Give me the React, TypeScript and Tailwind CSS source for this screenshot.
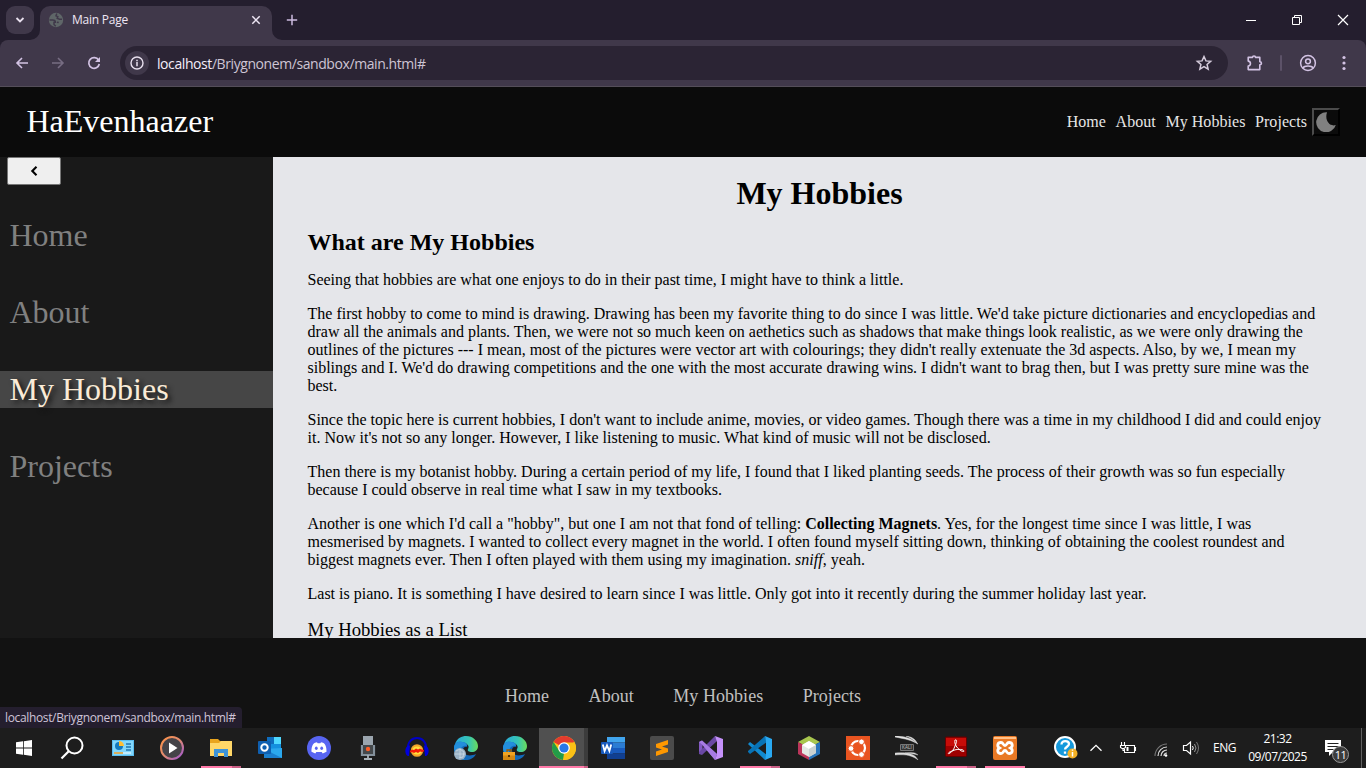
import React from 'react';
import type { ReactNode } from 'react';

const pages = ['Home', 'About', 'My Hobbies', 'Projects'];

function Ico({ s = 24, v = 24, children, className = '' }: { s?: number; v?: number; children: ReactNode; className?: string }) {
  return (
    <svg width={s} height={s} viewBox={`0 0 ${v} ${v}`} fill="none" className={`block shrink-0 ${className}`}>
      {children}
    </svg>
  );
}

function TabStrip() {
  return (
    <div className="flex h-10 shrink-0 bg-[#241e2e]">
      <div className="ml-1.5 mt-1.5 flex size-7 items-center justify-center rounded-[9px] bg-[#40384a]">
        <Ico s={10} v={10}><path d="M1.5 3l3.5 3.5L8.5 3" stroke="#e8e0ee" strokeWidth="1.8" /></Ico>
      </div>
      <div className="relative ml-1.5 mt-1.5 flex h-[34px] w-[232px] items-center rounded-t-[10px] bg-[#40384a] pb-[6px] pl-2">
        <svg width="10" height="10" className="absolute -left-[10px] bottom-0"><path d="M10 0v10H0A10 10 0 0 0 10 0" fill="#40384a" /></svg>
        <svg width="10" height="10" className="absolute -right-[10px] bottom-0"><path d="M0 0v10h10A10 10 0 0 1 0 0" fill="#40384a" /></svg>
        <Ico s={16} v={16}>
          <circle cx="8" cy="8" r="7.2" fill="#5f6668" />
          <path d="M8.800 1.500L8 3.800l1.800.8-.6 1.800 2.300.8h2.500M1.400 8h3.200c1.800 0 2.800.8 2.800 2.200H6v2.300l1.800 1.700M9 10.200l1.700.4" stroke="#40384a" strokeWidth="1.500" />
        </Ico>
        <span className="mb-px ml-2 mt-px text-[12px] leading-4 tracking-[-0.22px] text-[#eee6f4]">Main Page</span>
        <Ico s={10} v={10} className="ml-auto mr-[11px]"><path d="M1.300 1.300l7.400 7.400m0-7.400L1.300 8.700" stroke="#eee6f4" strokeWidth="1.500" /></Ico>
      </div>
      <Ico s={12} v={12} className="ml-[14px] mt-[14px]"><path d="M6 .8v10.400M.8 6h10.400" stroke="#cbbbe0" strokeWidth="1.500" /></Ico>
      <div className="ml-auto flex h-10 items-center">
        <div className="flex w-[46px] justify-center"><div className="h-px w-[10px] bg-white" /></div>
        <div className="flex w-[46px] justify-center">
          <Ico s={10} v={10}><path d="M.5 2.500h7v7h-7zM2.500 2.500v-2h7v7h-2" stroke="#fff" /></Ico>
        </div>
        <div className="flex w-[46px] justify-center">
          <Ico s={12} v={12}><path d="M1 1l10 10m0-10L1 11" stroke="#fff" strokeWidth="1.200" /></Ico>
        </div>
      </div>
    </div>
  );
}

function Toolbar() {
  return (
    <div className="h-[47px] shrink-0 bg-[#241e2e]">
      <div className="flex h-[47px] items-center rounded-t-[8px] border-b border-[#544e59] bg-[#40384a]">
        <Ico s={14} v={14} className="ml-[15px]"><path d="M13 7H2m5-5L2 7l5 5" stroke="#d3c3e4" strokeWidth="1.600" /></Ico>
        <Ico s={14} v={14} className="ml-[22px]"><path d="M1 7h11M7 2l5 5-5 5" stroke="#776d83" strokeWidth="1.600" /></Ico>
        <Ico s={14} v={14} className="ml-[22px]">
          <path d="M11.600 4.200A5.300 5.300 0 1 0 12.300 8" stroke="#d3c3e4" strokeWidth="1.700" />
          <path d="M13 1v5H8z" fill="#d3c3e4" />
        </Ico>
        <div className="ml-[19px] flex h-[34px] w-[1108px] items-center rounded-full bg-[#2b2434] pl-[5px]">
          <div className="flex size-6 items-center justify-center rounded-full bg-[#40384a]">
            <Ico s={14} v={14}>
              <circle cx="7" cy="7" r="6" stroke="#e8e0ee" strokeWidth="1.400" />
              <path d="M7 6v4.200M7 3.700v1.500" stroke="#e8e0ee" strokeWidth="1.500" />
            </Ico>
          </div>
          <span className="ml-2 mt-px text-[14px] leading-5 tracking-[-0.42px] text-[#cec5d4]"><span className="text-[#f4edf9]">localhost</span>/Briygnonem/sandbox/main.html#</span>
          <Ico s={18} v={24} className="ml-auto mr-[15px]">
            <path d="M12 3.400l2.600 5.800 6.300.6-4.800 4.200 1.400 6.200-5.500-3.300-5.500 3.300 1.400-6.200-4.800-4.200 6.300-.6z" stroke="#d6ccdc" strokeWidth="2" />
          </Ico>
        </div>
        <Ico s={18} v={18} className="ml-[17px]">
          <path d="M3.200 3.400H7.500C7.500 1.500 10.500 1.500 10.500 3.400h4.300v4.400c2.200 0 2.200 3 0 3v4.800H3.200v-3.500c3-.3 3-4.700 0-5z" stroke="#d3c3e4" strokeWidth="1.600" strokeLinejoin="round" />
        </Ico>
        <div className="ml-[17px] h-4 w-[2px] rounded bg-[#5c5268]" />
        <Ico s={18} v={18} className="ml-[17px]">
          <circle cx="9" cy="9" r="7.400" stroke="#d3c3e4" strokeWidth="1.500" />
          <circle cx="9" cy="7.300" r="2.400" stroke="#d3c3e4" strokeWidth="1.500" />
          <path d="M4 14c1.200-2.600 8.800-2.600 10 0" stroke="#d3c3e4" strokeWidth="1.500" />
        </Ico>
        <Ico s={16} v={16} className="ml-[19px]"><circle cx="8" cy="2.500" r="1.600" fill="#d3c3e4" /><circle cx="8" cy="8" r="1.600" fill="#d3c3e4" /><circle cx="8" cy="13.500" r="1.600" fill="#d3c3e4" /></Ico>
      </div>
    </div>
  );
}

function SiteHeader() {
  return (
    <header className="flex h-[70px] shrink-0 items-center bg-[#0b0b0b] pl-[26.5px] pr-[26px] text-white">
      <div className="mb-0.5 text-[32px] leading-[37px]">HaEvenhaazer</div>
      <nav className="ml-auto flex gap-[9.600px] text-[16px] leading-[18px] tracking-[0.05px] text-[#e6e6e6]">
        {pages.map((p) => <a key={p}>{p}</a>)}
      </nav>
      <button className="ml-[5px] flex size-7 items-center justify-center border-2 border-t-[#4b4b4b] border-r-black border-b-black border-l-[#4b4b4b] bg-[#0b0b0b]">
        <Ico s={20} v={20}><path d="M11 .3A10 10 0 1 0 19.800 13 C14 15 8.300 9 11 .3z" fill="#808080" /></Ico>
      </button>
    </header>
  );
}

function Sidebar() {
  return (
    <aside className="w-[273px] shrink-0 bg-[#191919]">
      <button className="ml-[7px] flex h-7 w-[54px] items-center justify-center rounded-[2px] border border-[#767676] bg-[#efefef]">
        <Ico s={10} v={10}><path d="M7.500 .8L3.300 5l4.200 4.200" stroke="#000" strokeWidth="2.100" /></Ico>
      </button>
      <ul className="mt-8 flex flex-col gap-10 text-[32px] leading-[37px]">
        {pages.map((p) => (
          <li key={p} className={p === 'My Hobbies' ? 'bg-[#464646] pl-[9.500px] text-[#faebd7] [text-shadow:3px_3px_5px_#111]' : 'pl-[9.500px] text-[#808080]'}>{p}</li>
        ))}
      </ul>
    </aside>
  );
}

function Article() {
  return (
    <main className="min-w-0 flex-1 overflow-hidden whitespace-nowrap bg-[#e5e6ea] px-[34.500px] text-[16px] leading-[18px] text-black">
      <h1 className="mt-[18px] text-center text-[32px] font-bold leading-[37px]">My Hobbies</h1>
      <h2 className="mt-[17px] text-[24px] font-bold leading-[27px]">What are My Hobbies</h2>
      <div className="mt-[15px] flex flex-col gap-4">
        <p>Seeing that hobbies are what one enjoys to do in their past time, I might have to think a little.</p>
        <p>
          The first hobby to come to mind is drawing. Drawing has been my favorite thing to do since I was little. We'd take picture dictionaries and encyclopedias and<br />
          draw all the animals and plants. Then, we were not so much keen on aethetics such as shadows that make things look realistic, as we were only drawing the<br />
          outlines of the pictures --- I mean, most of the pictures were vector art with colourings; they didn't really extenuate the 3d aspects. Also, by we, I mean my<br />
          siblings and I. We'd do drawing competitions and the one with the most accurate drawing wins. I didn't want to brag then, but I was pretty sure mine was the<br />
          best.
        </p>
        <p>
          Since the topic here is current hobbies, I don't want to include anime, movies, or video games. Though there was a time in my childhood I did and could enjoy<br />
          it. Now it's not so any longer. However, I like listening to music. What kind of music will not be disclosed.
        </p>
        <p>
          Then there is my botanist hobby. During a certain period of my life, I found that I liked planting seeds. The process of their growth was so fun especially<br />
          because I could observe in real time what I saw in my textbooks.
        </p>
        <p>
          Another is one which I'd call a "hobby", but one I am not that fond of telling: <b>Collecting Magnets</b>. Yes, for the longest time since I was little, I was<br />
          mesmerised by magnets. I wanted to collect every magnet in the world. I often found myself sitting down, thinking of obtaining the coolest roundest and<br />
          biggest magnets ever. Then I often played with them using my imagination. <i>sniff</i>, yeah.
        </p>
        <p>Last is piano. It is something I have desired to learn since I was little. Only got into it recently during the summer holiday last year.</p>
        <div className="text-[18.720px] leading-[22px]">My Hobbies as a List</div>
      </div>
    </main>
  );
}

function Footer() {
  return (
    <footer className="relative flex h-[90px] shrink-0 items-center justify-center gap-[39.500px] bg-[#121212] pt-[26px] text-[18px] leading-5 tracking-[0.04px] text-[#c0c0c0]">
      {pages.map((p) => <a key={p}>{p}</a>)}
      <div className="absolute bottom-0 left-0 h-[21px] w-[242px] rounded-tr-[4px] bg-[#241e2e] pl-[5px] font-['Open_Sans','Noto_Sans',sans-serif] text-[12px] leading-[21px] tracking-[-0.350px] text-[#cfc4d8]">localhost/Briygnonem/sandbox/main.html#</div>
    </footer>
  );
}

const Edge = () => (
  <>
    <path d="M1 8C3 2 8 0 12 0c7 0 12 5 12 10 0 4-3 6-6 6-3 0-5-1-4-3 2-3-1-6-5-6-3 0-6 0-8 1z" fill="url(#edgeGreen)" />
    <path d="M0 12C0 7 4 5 8 6c4 0 6 3 5 5-1-1-4 0-4 3 0 5 6 7 13 4-2 4-6 6-10 6A12 12 0 0 1 0 12z" fill="#1269ba" />
    <path d="M0 12C0 7 4 5 8 6c3 0 5 2 5 4-4-1-7 2-7 6 0 4 3 7 6 8A12 12 0 0 1 0 12z" fill="#238fdc" />
  </>
);

const icons: { art: ReactNode; run?: 'one' | 'many'; active?: boolean }[] = [
  { art: <><path d="M1 4h22v16H1z" fill="#5bbef0" /><path d="M2 5h20v14H2z" fill="#83d7fc" /><circle cx="8" cy="10" r="4" fill="#1479bd" /><path d="M8 10V5a5 5 0 0 1 5 5z" fill="#ffbd32" /><path d="M15 8h5M15 11h5M15 14h5" stroke="#2176ae" strokeWidth="1.600" /><path d="M3 17h9" stroke="#f5a12a" strokeWidth="1.500" /><path d="M12 17h8" stroke="#fff" /></> },
  { art: <><circle cx="12" cy="12" r="11" fill="#454348" stroke="url(#mediaRing)" strokeWidth="2" /><path d="M9 6.500l8.500 5.500L9 17.500z" fill="#fff" /></> },
  { art: <><path d="M1 3h8l2 2h12v15H1z" fill="#e9a51e" /><path d="M1 7h9l2-2h11v15H1z" fill="#ffd768" /><path d="M5 13h14v8h-4v-4H9v4H5z" fill="#3e94d8" /></>, run: 'many' },
  { art: <><path d="M9 1h14v15H9z" fill="#1490df" /><path d="M9 1h7v7H9z" fill="#0f6cbd" /><path d="M16 1h7v7h-7z" fill="#50d9ff" /><path d="M6 12l9 5 9-5v10H6z" fill="#1a7fce" /><path d="M24 12v10L6 13z" fill="#2ba8ed" /><rect y="5" width="13" height="13" rx="1" fill="#0f5fb0" /><circle cx="6.500" cy="11.500" r="3.200" stroke="#fff" strokeWidth="2" /></> },
  { art: <><circle cx="12" cy="12" r="12" fill="#5865f2" /><path d="M8 6.700l2-.5.600 1h2.800l.600-1 2 .5c2.500.800 3.800 5.500 3.500 9L15.700 17.500l-1-1.500H9.300L8.300 17.500l-3.800-1.800C4.200 12.200 5.500 7.500 8 6.700z" fill="#fff" /><ellipse cx="9.300" cy="12.300" rx="1.400" ry="1.700" fill="#5865f2" /><ellipse cx="14.700" cy="12.300" rx="1.400" ry="1.700" fill="#5865f2" /></> },
  { art: <><path d="M7 0h10v9H7z" fill="#9ba5ae" /><path d="M6 9v10h12V9" stroke="#84919c" strokeWidth="2.200" /><path d="M7 9h10v9H7z" fill="#44484b" /><circle cx="12" cy="13" r="2.200" fill="#ff5d25" /><path d="M12 19v4M8 23h8" stroke="#a6b0b7" strokeWidth="1.800" /></> },
  { art: <><path d="M3 14C1-2 23-2 21 14" stroke="#0000c8" strokeWidth="1.900" /><ellipse cx="12" cy="14.500" rx="6.200" ry="6.300" fill="#f5a52b" /><ellipse cx="12" cy="14.500" rx="5" ry="4" fill="#ffe13a" /><path d="M5 15l2-1.500 2 .5 2-1.500 2 1 2-1 2 1 2 .5v1.500l-2 .5-2-.5-2 1.500-2-1-2 1-2-1-2 .5z" fill="#f21a0a" /><path d="M5 9.500C-1 9-1 20 4 20zM19 9.500C25 9 25 20 20 20z" fill="#0000dd" /></> },
  { art: <><Edge /><circle cx="6" cy="18" r="6" fill="#9bb3c7" /><path d="M2 15l4-2 4 3-1 5-4 1M6 13v9M1 18h10" stroke="#cfdeea" strokeWidth=".700" /></> },
  { art: <><Edge /><path d="M4 16v-2h4v2" stroke="#9e5a00" strokeWidth="1.300" /><path d="M0 16h12v8H0z" fill="#d48812" /><path d="M0 16h12v3.500H0z" fill="#f1a322" /><path d="M5 19h2v2H5z" fill="#553000" /></> },
  { art: <><circle cx="12" cy="12" r="12" fill="#fbc116" /><path d="M12 12L1.600 6A12 12 0 0 1 22.400 6z" fill="#e33b2e" /><path d="M1.600 6L7.300 15 12 17.500 11 24A12 12 0 0 1 1.600 6z" fill="#239b48" /><path d="M12 6.500h10.600A12 12 0 0 1 11 24l5.500-9.500z" fill="#fbc116" /><circle cx="12" cy="12" r="5.800" fill="#fff" /><circle cx="12" cy="12" r="4.600" fill="#2878e8" /></>, run: 'many', active: true },
  { art: <><path d="M6 1h18v5.500H6z" fill="#41a5ee" /><path d="M6 6.500h18V12H6z" fill="#2b7cd3" /><path d="M6 12h18v5.500H6z" fill="#185abd" /><path d="M6 17.500h18V23H6z" fill="#103f91" /><rect y="6" width="12" height="12" rx="1" fill="#185abd" /><path d="M1.800 8.500L3.600 15 6 9.300l2.400 5.700 1.800-6.500" stroke="#fff" strokeWidth="1.800" /></> },
  { art: <><rect width="24" height="24" rx="2" fill="#4b4b4b" /><path d="M6 8l12-4v4.500l-6 2 6 2V16L6 20v-4.500l6-2-6-2z" fill="#ff9800" /></> },
  { art: <><path d="M0 6l3-1.500L18 18l-2 6L3.500 9v6L0 18z" fill="#8359c1" /><path d="M3 19L18 5l-2-5L0 16v2z" fill="#6a48a4" /><path d="M0 6l3-1.500L18 18l-2 6L3 8.500z" fill="#a77be2" /><path d="M16 0l8 3v18l-8 3 2-6V6z" fill="#c591fa" /></> },
  { art: <><path d="M0 8l2-2 17 13-2 5L1 9z" fill="#1189cf" /><path d="M0 16l2 2L19 6l-2-6L0 15z" fill="#0873b6" /><path d="M17 0l7 3v18l-7 3 1-5V5z" fill="#29a9f2" /></>, run: 'many' },
  { art: <><path d="M12 0l11 6-11 6L1 6z" fill="#a8c64e" /><path d="M1 6l11 6v12L1 18z" fill="#bb355a" /><path d="M23 6l-11 6v12l11-6z" fill="#2874bb" /><path d="M12 5l7 4v8l-7 4-7-4V9z" fill="#e2e8e4" /><path d="M12 5l7 4-7 4-7-4z" fill="#fff" /><path d="M12 13l7-4v8l-7 4z" fill="#cad2d2" /></> },
  { art: <><path d="M0 0h24v24H0z" fill="#e95420" /><circle cx="12" cy="12" r="7" stroke="#fff" strokeWidth="2.200" /><g fill="#fff" stroke="#e95420" strokeWidth="1"><circle cx="5" cy="12.500" r="2.900" /><circle cx="15.500" cy="5.800" r="2.900" /><circle cx="15.500" cy="18.500" r="2.900" /></g></> },
  { art: <><path d="M0 0c9 0 16 2 23 8-7-4-12-5-23-7zM11 0c6 1 9 3 11 7-3-3-6-5-11-7z" fill="#e5e5e5" stroke="#ddd" strokeWidth=".500" /><path d="M0 17c10-1 20 0 23 7-5-4-11-6-23-5zM10 17c6-1 10-1 13 2-4-1-8-2-13-2z" fill="#ddd" stroke="#ccc" strokeWidth=".400" /><path d="M5.500 8.500h13v6h-13z" fill="#333" stroke="#777" /><text x="7" y="13.300" fontSize="4.500" fill="#bbb" fontFamily="Liberation Sans">KALI</text></> },
  { art: <><rect x="1.500" y="1" width="21" height="19.500" rx="1" fill="#9e0000" stroke="#650000" /><path d="M2 2h20v8H2z" fill="#c70c08" /><path d="M11 4c3-1 1 4 0 6-1 3-3 6-5 7-3 2-2-1 2-2 4-2 8-2 11-1 3 2-1 2-3 0-3-2-6-6-5-10z" stroke="#fff" strokeWidth="1" /></>, run: 'many' },
  { art: <><rect width="24" height="24" rx="2" fill="#e97925" /><path d="M1 1h22v2H1z" fill="#ffc18a" /><path d="M8 6.500c2.500 0 2 3 4 3s1.500-3 4-3c4 0 4 4 1.500 5.500 2.500 1.500 2.500 5.500-1.500 5.500-2.500 0-2-3-4-3s-1.500 3-4 3c-4 0-4-4-1.500-5.500C4 10.500 4 6.500 8 6.500z" stroke="#fff" strokeWidth="2.800" /></>, run: 'one' },
];

function Taskbar() {
  return (
    <div className="flex h-10 shrink-0 bg-[#1d1d1d] text-white">
      <svg width="0" height="0" className="absolute">
        <defs>
          <linearGradient id="edgeGreen"><stop stopColor="#29a8db" /><stop offset=".6" stopColor="#36c6b5" /><stop offset="1" stopColor="#6bdc5b" /></linearGradient>
          <linearGradient id="mediaRing" x1="0" y1="0" x2="1" y2="1"><stop stopColor="#ff9346" /><stop offset=".5" stopColor="#e08a72" /><stop offset="1" stopColor="#9b54d8" /></linearGradient>
        </defs>
      </svg>
      <div className="flex w-12 items-center justify-center">
        <Ico s={16} v={16}><path d="M0 2.300l7-1v6.300H0zM7.800 1.200L16 0v7.600H7.800zM0 8.500h7v6.200l-7-1zM7.800 8.500H16V16l-8.200-1.200z" fill="#fff" /></Ico>
      </div>
      <div className="flex w-[50px] items-center justify-center pr-[3px]">
        <Ico s={24} v={24}><circle cx="14.500" cy="9.500" r="8" stroke="#fff" strokeWidth="2" /><path d="M8.700 15.200L1.500 22.500" stroke="#fff" strokeWidth="2.200" /></Ico>
      </div>
      {icons.map((it, i) => (
        <div key={i} className="flex h-10 w-[49px] shrink-0 flex-col items-center">
          <div className={it.active ? 'flex h-[38px] w-full border-r-4 border-[#3c3c3c] bg-[#505050] pl-[13px] pt-2' : 'flex h-[38px] w-full justify-center pt-2'}>
            <Ico>{it.art}</Ico>
          </div>
          {it.run && (
            <div className={it.active ? 'flex h-[2px] w-full bg-[#ff79a8]' : 'flex h-[2px] w-10 bg-[#ff79a8]'}>
              {it.run === 'many' && <div className={it.active ? 'ml-auto w-1 bg-[#c85f85]' : 'ml-auto w-[9px] bg-[#c85f85]'} />}
            </div>
          )}
        </div>
      ))}
      <div className="ml-auto flex h-10 items-center text-[12px]">
        <Ico s={24} v={24}><circle cx="11" cy="11" r="10" fill="#1599dc" stroke="#fff" strokeWidth="2" /><path d="M7.500 8.500c0-5 7.500-4 7.500-.5 0 2.500-4 3-4 5.500M11 15.500v2.200" stroke="#fff" strokeWidth="2.300" /><circle cx="18.500" cy="17.500" r="5" fill="#f5b125" /><path d="M18.500 16v4.500M18.500 13.500v1.300" stroke="#fff" strokeWidth="1.500" /></Ico>
        <Ico s={12} v={12} className="ml-[12px]"><path d="M.5 8.800L6 3.300l5.500 5.500" stroke="#fff" strokeWidth="1.300" /></Ico>
        <Ico s={18} v={18} className="ml-[17px]"><path d="M7 6.500h8.500v7H5.500V10M15.500 8.500h1v3h-1M2.500 3v3m3-3v3M1.500 6.500h5v2l-1.500 1H3l-1.500-1zM4 9.500v2h2" stroke="#fff" strokeWidth="1.100" /><path d="M7.500 8h2v4h-2z" fill="#fff" /></Ico>
        <Ico s={15} v={15} className="ml-[17px] mt-1"><path d="M1 13A12 12 0 0 1 13 1" stroke="#777" strokeWidth="1.100" /><path d="M4 13a9 9 0 0 1 9-9M7 13a6 6 0 0 1 6-6M10 13a3 3 0 0 1 3-3" stroke="#ddd" strokeWidth="1.200" /><circle cx="12" cy="12.500" r="1.300" fill="#fff" /></Ico>
        <Ico s={18} v={18} className="ml-[13px]"><path d="M1.500 6.500h3L8.500 3v12l-4-3.500h-3z" stroke="#fff" strokeWidth="1.200" /><path d="M10.500 7q1.500 2 0 4" stroke="#fff" /><path d="M12.500 5q3 4 0 8" stroke="#999" /><path d="M14.500 3q4 6 0 12" stroke="#777" /></Ico>
        <span className="ml-[13px] w-6 leading-4 tracking-[-0.500px]">ENG</span>
        <div className="ml-2 flex w-[65px] flex-col items-center whitespace-nowrap leading-[18px] tracking-[-0.520px]"><span>21:32</span><span>09/07/2025</span></div>
        <div className="relative ml-[14px] h-10 w-[27px]">
          <Ico s={18} v={18} className="mt-[11px]"><path d="M1 1h16v12H9l-4 4v-4H1z" fill="#fff" /><path d="M3.500 4.500h11M3.500 7.500h11M3.500 10.500h6" stroke="#222" /></Ico>
          <span className="absolute left-2 top-[18px] flex size-[17px] items-center justify-center rounded-full border border-[#999] bg-[#3b3b3b] text-[11px] leading-none tracking-[-0.500px]">11</span>
        </div>
        <div className="ml-[10px] mr-1 h-10 w-px bg-[#606060]" />
      </div>
    </div>
  );
}

export default function App() {
  return (
    <div className="flex h-[768px] w-[1366px] flex-col overflow-hidden bg-[#121212] font-['Open_Sans','Noto_Sans',sans-serif]">
      <TabStrip />
      <Toolbar />
      <div className="flex h-[641px] shrink-0 flex-col font-['Liberation_Serif',serif]">
        <SiteHeader />
        <div className="flex h-[481px] shrink-0 overflow-hidden"><Sidebar /><Article /></div>
        <Footer />
      </div>
      <Taskbar />
    </div>
  );
}
